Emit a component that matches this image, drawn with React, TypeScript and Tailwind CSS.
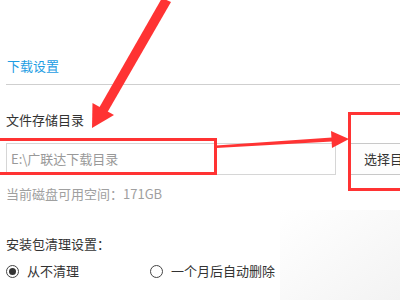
import React from "react";

function Radio({ checked }: { checked?: boolean }) {
  return (
    <span className="flex h-[13px] w-[13px] items-center justify-center rounded-full border border-[#444] bg-white">
      {checked ? <span className="h-[7px] w-[7px] rounded-full bg-[#333]" /> : null}
    </span>
  );
}

export default function App() {
  const font = { fontFamily: '"Microsoft YaHei", "Noto Sans CJK SC", "Noto Sans", sans-serif' };
  return (
    <div className="relative h-[300px] w-[400px] overflow-hidden bg-white" style={font}>
      <div className="pl-[6px] pt-[57px] text-[13px]">
        <div className="h-[18px] pl-px leading-[18px] text-[#1e9de3]">下载设置</div>
        <div className="mt-[9px] h-px bg-[#cfcfcf]" />
        <div className="mt-[26px] h-[18px] leading-[18px] text-[#333]">文件存储目录</div>
        <div className="mt-[14px] flex h-[32px] gap-[14px]">
          <div className="flex w-[330px] shrink-0 items-center border border-[#d6d6d6] bg-white pl-[4px] text-[#999]">
            E:\广联达下载目录
          </div>
          <div className="flex w-[120px] shrink-0 items-center border border-[#c8c8c8] bg-[#fdfdfd] pl-[13px] text-[#333]">
            选择目录
          </div>
        </div>
        <div className="mt-[10px] h-[18px] leading-[18px] text-[#a0a0a0]">当前磁盘可用空间：171GB</div>
        <div className="mt-[32px] h-[18px] leading-[18px] text-[#333]">安装包清理设置：</div>
        <div className="mt-[9px] flex h-[18px] items-center leading-[18px] text-[#333]">
          <div className="flex w-[144px] items-center gap-[8px]">
            <Radio checked />
            <span>从不清理</span>
          </div>
          <div className="flex items-center gap-[8px]">
            <Radio />
            <span>一个月后自动删除</span>
          </div>
        </div>
      </div>

      <div className="pointer-events-none absolute bottom-0 right-0 h-[90px] w-[120px] bg-gradient-to-br from-transparent to-[#f3f3f3]" />

      <div className="pointer-events-none absolute left-[-5px] top-[138px] h-[37px] w-[222px] border-[3px] border-[#ff3333]" />
      <div className="pointer-events-none absolute left-[348px] top-[112px] h-[79px] w-[80px] border-[3px] border-[#ff3333]" />

      <svg className="pointer-events-none absolute left-0 top-0" width="400" height="300" viewBox="0 0 400 300">
        <polygon points="216,145.5 332,137.5 332,141.5 216,148" fill="#ff3333" />
        <polygon points="331,131 349,139 332,148" fill="#ff3333" />
        <polygon points="162,-2 171,2 107,113 99,108" fill="#ff3333" />
        <polygon points="92,128 92.5,103 114,115" fill="#ff3333" />
      </svg>
    </div>
  );
}
